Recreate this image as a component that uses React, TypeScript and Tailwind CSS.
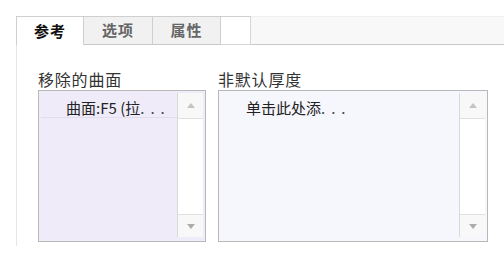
import React from "react";

const font = { fontFamily: '"Noto Sans CJK SC", "Noto Sans", sans-serif' };

function Tab({ label, active }: { label: string; active?: boolean }) {
  return (
    <div
      className={
        "flex h-full items-center justify-center border-r border-[#cfcfcf] text-[15px] font-bold tracking-[1px] " +
        (active ? "bg-white text-[#111]" : "border-b border-b-[#c9c9c9] bg-[#f1f1f1] text-[#666]")
      }
    >
      {label}
    </div>
  );
}

function ScrollBar() {
  return (
    <div className="flex w-[26px] shrink-0 flex-col border-l border-[#d9d9d9] bg-white">
      <div className="flex h-[26px] items-center justify-center border-b border-[#e0e0e0] bg-[#f8f8f8]">
        <div className="h-0 w-0 border-x-[4px] border-b-[5px] border-x-transparent border-b-[#c4c4c4]" />
      </div>
      <div className="flex-1" />
      <div className="flex h-[23px] items-center justify-center border-t border-[#e0e0e0] bg-[#f8f8f8]">
        <div className="h-0 w-0 border-x-[4px] border-t-[5px] border-x-transparent border-t-[#acacac]" />
      </div>
    </div>
  );
}

function ListBox({
  label,
  item,
  width,
  bg,
  rowLine,
}: {
  label: string;
  item: string;
  width: number;
  bg: string;
  rowLine?: boolean;
}) {
  return (
    <div className="flex flex-col" style={{ width }}>
      <div className="h-[19px] text-[16px] leading-[17px] tracking-[0.8px] text-[#333]">{label}</div>
      <div className={"flex h-[152px] border border-[#b8b8b8] p-[2px] pb-[4px] " + bg}>
        <div className="min-w-0 flex-1">
          <div
            className={
              "h-[25px] overflow-hidden whitespace-nowrap pl-[25px] pt-[6px] text-[15px] leading-[17px] text-[#222] " +
              (rowLine ? "border-b border-[#e2dcef]" : "")
            }
          >
            {item}
            <span className="tracking-[6px] text-[#444]">...</span>
          </div>
        </div>
        <ScrollBar />
      </div>
    </div>
  );
}

export default function App() {
  return (
    <div className="h-[269px] w-[504px] overflow-hidden bg-white" style={font}>
      <div className="flex h-[45px] pt-[16px]">
        <div className="w-[16px]" />
        <div className="grid h-full grid-cols-[67px_69px_68px_30px] border-t border-l border-[#cfcfcf]">
          <Tab label="参考" active />
          <Tab label="选项" />
          <Tab label="属性" />
          <div className="border-r border-b border-[#d6d6d6] bg-white" />
        </div>
        <div className="flex-1 border-b border-[#c9c9c9] bg-[#f8f8f8] [border-top:1px_solid_#f0f0f0]" />
      </div>
      <div className="ml-[16px] h-[201px] border-l border-[#e6e6e6] pl-[21px] pt-[26px]">
        <div className="flex gap-[12px]">
          <ListBox label="移除的曲面" item="曲面:F5 (拉" width={168} bg="bg-[#efebf8]" rowLine />
          <ListBox label="非默认厚度" item="单击此处添" width={270} bg="bg-[#f6f6fd]" />
        </div>
      </div>
    </div>
  );
}
